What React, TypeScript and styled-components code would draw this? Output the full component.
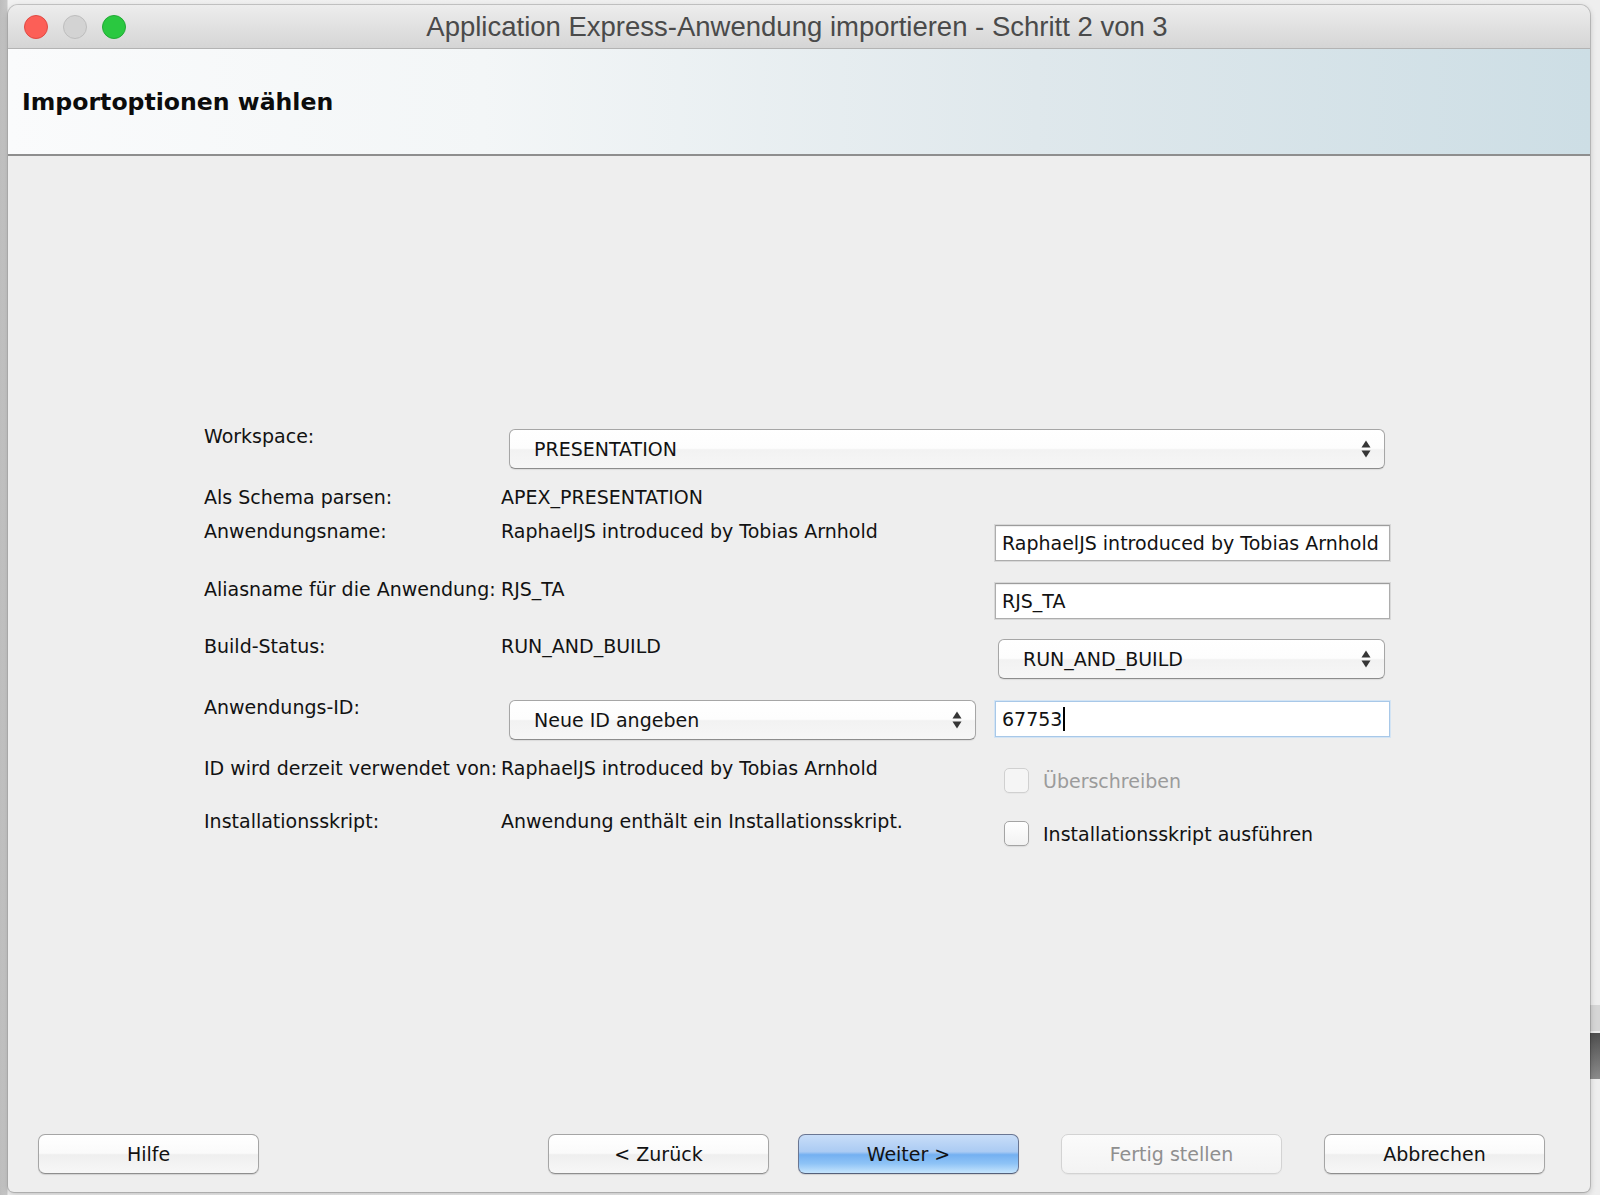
import React from "react";
import styled, { createGlobalStyle, css } from "styled-components";

const GlobalStyle = createGlobalStyle`
  html, body { margin: 0; padding: 0; }
  body {
    width: 1600px;
    height: 1195px;
    overflow: hidden;
    background:
      linear-gradient(#d6d6d6, #d6d6d6) right 0 top 1005px / 10px 26px no-repeat,
      linear-gradient(#4f4f4f, #8c8c8c) right 0 top 1033px / 10px 46px no-repeat,
      linear-gradient(to right, #bdbdbd 0, #c8c8c8 7px, #f1f1f1 8px, #eeeeee 100%);
    font-family: "DejaVu Sans", "Liberation Sans", sans-serif;
  }
`;

const Desktop = styled.div`
  box-sizing: border-box;
  width: 1600px;
  height: 1195px;
  padding: 5px 10px 3px 8px;
`;

const Window = styled.div`
  box-sizing: border-box;
  width: 1582px;
  height: 1187px;
  display: flex;
  flex-direction: column;
  border-radius: 10px 10px 6px 6px;
  overflow: hidden;
  background: #eeeeee;
  box-shadow: 0 0 0 1px rgba(0, 0, 0, 0.16), 0 2px 6px rgba(0, 0, 0, 0.22);
`;

const TitleBar = styled.div`
  box-sizing: border-box;
  height: 44px;
  flex: none;
  display: grid;
  grid-template-columns: 1fr auto 1fr;
  align-items: center;
  padding: 0 16px;
  background: linear-gradient(#ededed, #d5d5d5);
  border-bottom: 1px solid #b3b3b3;
`;

const Lights = styled.div`
  display: flex;
  gap: 15px;
`;

const Light = styled.span<{ $color: string; $border: string }>`
  box-sizing: border-box;
  width: 24px;
  height: 24px;
  border-radius: 50%;
  background: ${(p) => p.$color};
  border: 1px solid ${(p) => p.$border};
`;

const WindowTitle = styled.div`
  font-family: "Liberation Sans", Arial, sans-serif;
  font-size: 27.5px;
  color: #4a4a4a;
  white-space: nowrap;
  margin-right: 4px;
`;

const Header = styled.div`
  box-sizing: border-box;
  height: 107px;
  flex: none;
  display: flex;
  align-items: center;
  padding-left: 14px;
  background: linear-gradient(to right, #fafbfc 0%, #f3f6f7 30%, #dfe8ec 65%, #cddee5 100%);
  border-bottom: 2px solid #8e8e8e;
`;

const HeaderTitle = styled.h1`
  margin: 0;
  font-family: "DejaVu Sans", sans-serif;
  font-weight: bold;
  font-size: 23.6px;
  color: #0c0c0c;
`;

const Content = styled.div`
  flex: 1;
  display: flex;
  flex-direction: column;
  padding: 269px 0 18px;
`;

const FormGrid = styled.div`
  display: grid;
  grid-template-columns: 297px 494px 395px;
  grid-template-rows: 61px 34px 58px 57px 61px 61px 53px auto;
  align-items: start;
  margin-left: 196px;
`;

const Label = styled.div`
  grid-column: 1;
  font-size: 19px;
  line-height: 22px;
  color: #121212;
  white-space: nowrap;
`;

const Value = styled.div`
  grid-column: 2;
  font-size: 19px;
  line-height: 22px;
  color: #121212;
  white-space: nowrap;
`;

const Combo = styled.div<{ $column: string; $margin: string }>`
  grid-column: ${(p) => p.$column};
  margin: ${(p) => p.$margin};
  box-sizing: border-box;
  height: 40px;
  display: flex;
  align-items: center;
  justify-content: space-between;
  padding: 0 12px 0 24px;
  border: 1px solid #a6a6a6;
  border-bottom-color: #8c8c8c;
  border-radius: 6px;
  background: linear-gradient(#ffffff 0%, #fdfdfd 48%, #f2f2f2 52%, #f6f6f6 100%);
  box-shadow: 0 1px 1px rgba(0, 0, 0, 0.08);
  font-size: 19px;
  color: #121212;
  white-space: nowrap;
`;

const Field = styled.div<{ $focused?: boolean }>`
  grid-column: 3;
  margin-top: 5px;
  box-sizing: border-box;
  height: 36px;
  display: flex;
  align-items: center;
  padding-left: 6px;
  background: #ffffff;
  border: 1px solid #adadad;
  border-top-color: #9c9c9c;
  box-shadow: inset 0 1px 1px rgba(0, 0, 0, 0.07), 0 0 0 1px #d8d8d8;
  font-size: 19px;
  color: #121212;
  white-space: nowrap;
  overflow: hidden;
  ${(p) =>
    p.$focused &&
    css`
      border-color: #a8c8e8;
      box-shadow: 0 0 0 1px #d3e4f4;
    `}
`;

const Caret = styled.span`
  display: inline-block;
  width: 2px;
  height: 24px;
  margin-left: 1px;
  background: #000;
`;

const CheckRow = styled.div<{ $disabled?: boolean }>`
  grid-column: 3;
  margin: 11px 0 0 9px;
  display: flex;
  align-items: center;
  gap: 14px;
  font-size: 19px;
  color: ${(p) => (p.$disabled ? "#9b9b9b" : "#121212")};
  white-space: nowrap;
`;

const Box = styled.span<{ $disabled?: boolean }>`
  box-sizing: border-box;
  width: 25px;
  height: 25px;
  border-radius: 5px;
  border: 1px solid ${(p) => (p.$disabled ? "#d0d0d0" : "#a4a4a4")};
  background: ${(p) => (p.$disabled ? "#f5f5f5" : "linear-gradient(#ffffff, #f2f2f2)")};
  box-shadow: 0 1px 1px rgba(0, 0, 0, ${(p) => (p.$disabled ? 0.03 : 0.08)});
`;

const ButtonBar = styled.div`
  margin-top: auto;
  display: flex;
  align-items: center;
  gap: 42px;
  padding: 0 45px 0 30px;
`;

const ButtonGroup = styled.div<{ $gap: number }>`
  display: flex;
  gap: ${(p) => p.$gap}px;
`;

const Spacer = styled.div`
  flex: 1;
`;

type Variant = "default" | "primary" | "disabled";

const Button = styled.button<{ $variant?: Variant }>`
  box-sizing: border-box;
  width: 221px;
  height: 40px;
  padding: 0;
  border-radius: 7px;
  font-family: "DejaVu Sans", sans-serif;
  font-size: 19px;
  color: #121212;
  border: 1px solid #a5a5a5;
  border-bottom-color: #8e8e8e;
  background: linear-gradient(#ffffff 0%, #fafafa 48%, #efefef 52%, #f7f7f7 100%);
  box-shadow: 0 1px 1px rgba(0, 0, 0, 0.12);
  cursor: default;
  ${(p) =>
    p.$variant === "primary" &&
    css`
      border-color: #6a7692;
      border-bottom-color: #55607a;
      background: linear-gradient(#c8ddf8 0%, #abcbf3 44%, #74b0f1 52%, #8ec3f6 75%, #c6e5fd 100%);
    `}
  ${(p) =>
    p.$variant === "disabled" &&
    css`
      color: #8f8f8f;
      border-color: #d3d3d3;
      background: linear-gradient(#fbfbfb, #f3f3f3);
      box-shadow: 0 1px 1px rgba(0, 0, 0, 0.04);
    `}
`;

const Arrows = () => (
  <svg width="12" height="20" viewBox="0 0 12 20" aria-hidden="true">
    <path d="M6 1.5 L10.5 8.5 H1.5 Z" fill="#353535" />
    <path d="M6 18.5 L10.5 11.5 H1.5 Z" fill="#353535" />
  </svg>
);

export default function App() {
  return (
    <>
      <GlobalStyle />
      <Desktop>
        <Window>
          <TitleBar>
            <Lights>
              <Light $color="#fc5f57" $border="#df4a44" />
              <Light $color="#d3d3d3" $border="#bdbdbd" />
              <Light $color="#2ac840" $border="#22a935" />
            </Lights>
            <WindowTitle>Application Express-Anwendung importieren - Schritt 2 von 3</WindowTitle>
            <div />
          </TitleBar>
          <Header>
            <HeaderTitle>Importoptionen wählen</HeaderTitle>
          </Header>
          <Content>
            <FormGrid>
              <Label>Workspace:</Label>
              <Combo $column="2 / 4" $margin="4px 5px 0 8px">
                <span>PRESENTATION</span>
                <Arrows />
              </Combo>

              <Label>Als Schema parsen:</Label>
              <Value>APEX_PRESENTATION</Value>

              <Label>Anwendungsname:</Label>
              <Value>RaphaelJS introduced by Tobias Arnhold</Value>
              <Field>RaphaelJS introduced by Tobias Arnhold</Field>

              <Label>Aliasname für die Anwendung:</Label>
              <Value>RJS_TA</Value>
              <Field>RJS_TA</Field>

              <Label>Build-Status:</Label>
              <Value>RUN_AND_BUILD</Value>
              <Combo $column="3" $margin="4px 5px 0 3px">
                <span>RUN_AND_BUILD</span>
                <Arrows />
              </Combo>

              <Label>Anwendungs-ID:</Label>
              <Combo $column="2" $margin="4px 19px 0 8px">
                <span>Neue ID angeben</span>
                <Arrows />
              </Combo>
              <Field $focused>
                67753
                <Caret />
              </Field>

              <Label>ID wird derzeit verwendet von:</Label>
              <Value>RaphaelJS introduced by Tobias Arnhold</Value>
              <CheckRow $disabled>
                <Box $disabled />
                Überschreiben
              </CheckRow>

              <Label>Installationsskript:</Label>
              <Value>Anwendung enthält ein Installationsskript.</Value>
              <CheckRow>
                <Box />
                Installationsskript ausführen
              </CheckRow>
            </FormGrid>

            <ButtonBar>
              <Button>Hilfe</Button>
              <Spacer />
              <ButtonGroup $gap={29}>
                <Button>&lt; Zurück</Button>
                <Button $variant="primary">Weiter &gt;</Button>
              </ButtonGroup>
              <ButtonGroup $gap={42}>
                <Button $variant="disabled">Fertig stellen</Button>
                <Button>Abbrechen</Button>
              </ButtonGroup>
            </ButtonBar>
          </Content>
        </Window>
      </Desktop>
    </>
  );
}
